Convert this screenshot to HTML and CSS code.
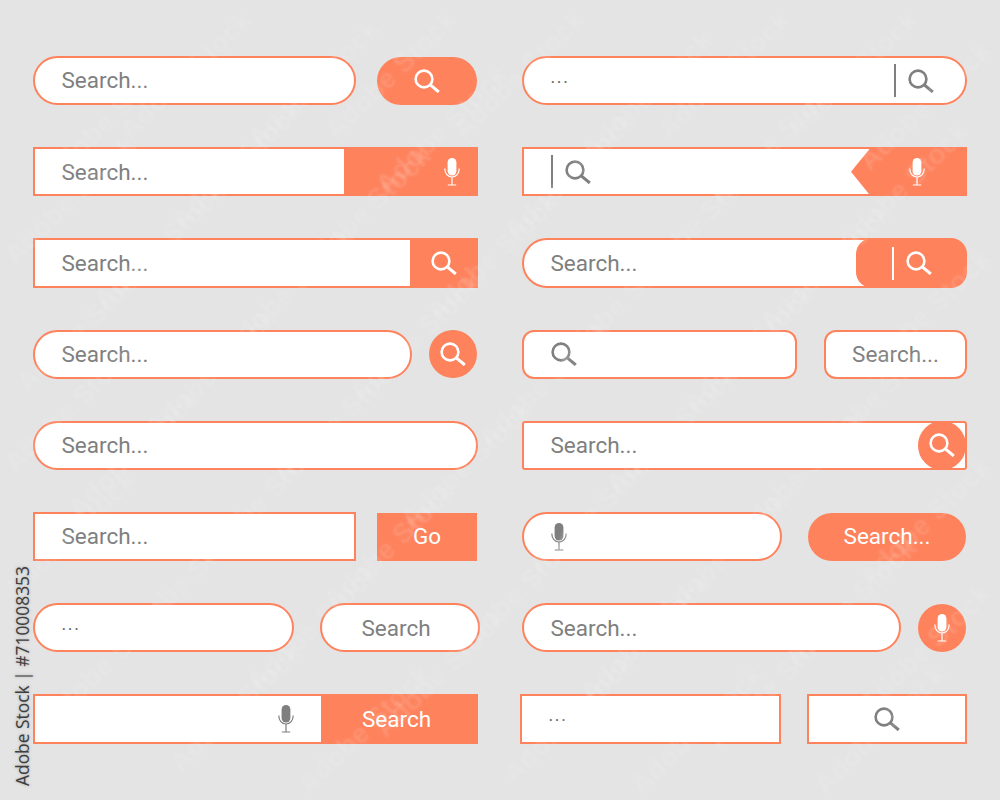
FILE: index.html
```html
<!DOCTYPE html>
<html lang="en">
<head>
<meta charset="utf-8">
<title>Search bars</title>
<link rel="stylesheet" href="styles.css">
</head>
<body>
<svg class="defs" width="0" height="0" aria-hidden="true">
  <symbol id="i-search" viewBox="0 0 26 24">
    <circle cx="10" cy="10" r="8.4" fill="none" stroke="currentColor" stroke-width="2.6"/>
    <path d="M16 15.6 L24.8 23" fill="none" stroke="currentColor" stroke-width="3"/>
  </symbol>
  <symbol id="i-mic" viewBox="0 0 16 28">
    <rect x="3.6" y="0" width="8.8" height="17.5" rx="4.4" fill="currentColor"/>
    <path d="M0.8 10.5 C0.8 15.5 3.8 19 8 19 C12.2 19 15.2 15.5 15.2 10.5 M8 19 V27 M3.8 27 H12.2" fill="none" stroke="currentColor" stroke-width="1.2"/>
  </symbol>
</svg>

<main class="board">
  <section class="col">
    <div class="row">
      <div class="field pill w323"><span class="txt">Search...</span></div>
      <div class="solid pill w100 mla mr1"><svg class="ico-s"><use href="#i-search"/></svg></div>
    </div>
    <div class="row">
      <div class="field full"><span class="txt">Search...</span>
        <div class="end w134 pr18"><svg class="ico-m"><use href="#i-mic"/></svg></div>
      </div>
    </div>
    <div class="row">
      <div class="field full"><span class="txt">Search...</span>
        <div class="end w68 center"><svg class="ico-s"><use href="#i-search"/></svg></div>
      </div>
    </div>
    <div class="row">
      <div class="field pill w379"><span class="txt">Search...</span></div>
      <div class="solid round mla mr1"><svg class="ico-s"><use href="#i-search"/></svg></div>
    </div>
    <div class="row">
      <div class="field pill full"><span class="txt">Search...</span></div>
    </div>
    <div class="row">
      <div class="field w323"><span class="txt">Search...</span></div>
      <div class="solid w100 mla mr1"><span class="txt-w">Go</span></div>
    </div>
    <div class="row">
      <div class="field pill w261"><span class="dots">...</span></div>
      <div class="field pill w160 center mla over1 pr8"><span class="txt">Search</span></div>
    </div>
    <div class="row">
      <div class="field full">
        <svg class="ico-m grey mla mr27"><use href="#i-mic"/></svg>
        <div class="end w157 center flat pr6"><span class="txt-w">Search</span></div>
      </div>
    </div>
  </section>

  <section class="col">
    <div class="row">
      <div class="field pill full"><span class="dots">...</span>
        <div class="tool grey mla mr31"><i class="bar"></i><svg class="ico-s"><use href="#i-search"/></svg></div>
      </div>
    </div>
    <div class="row">
      <div class="field full">
        <div class="tool grey"><i class="bar"></i><svg class="ico-s"><use href="#i-search"/></svg></div>
        <div class="end w116 arrow center"><svg class="ico-m"><use href="#i-mic"/></svg></div>
      </div>
    </div>
    <div class="row">
      <div class="field pill full"><span class="txt">Search...</span>
        <div class="end w111 center soft"><div class="tool white"><i class="bar"></i><svg class="ico-s"><use href="#i-search"/></svg></div></div>
      </div>
    </div>
    <div class="row">
      <div class="field r12 w275"><svg class="ico-s grey"><use href="#i-search"/></svg></div>
      <div class="field r12 w143 center mla"><span class="txt">Search...</span></div>
    </div>
    <div class="row">
      <div class="field r3 full"><span class="txt">Search...</span>
        <div class="solid round end-round"><svg class="ico-s"><use href="#i-search"/></svg></div>
      </div>
    </div>
    <div class="row">
      <div class="field pill w260"><svg class="ico-m grey"><use href="#i-mic"/></svg></div>
      <div class="solid pill w158 mla mr1"><span class="txt-w">Search...</span></div>
    </div>
    <div class="row">
      <div class="field pill w379"><span class="txt">Search...</span></div>
      <div class="solid round mla mr1"><svg class="ico-m"><use href="#i-mic"/></svg></div>
    </div>
    <div class="row shift">
      <div class="field w261"><span class="dots">...</span></div>
      <div class="field w160 center mla"><svg class="ico-s grey"><use href="#i-search"/></svg></div>
    </div>
  </section>
</main>

<div class="marks" aria-hidden="true">
  <span style="left:70px;top:200px">Adobe Stock</span><span style="left:237px;top:165px">Adobe Stock</span><span style="left:442px;top:130px">Adobe Stock</span><span style="left:647px;top:95px">Adobe Stock</span><span style="left:852px;top:75px">Adobe Stock</span>
  <span style="left:160px;top:246px">Adobe Stock</span><span style="left:365px;top:211px">Adobe Stock</span><span style="left:570px;top:176px">Adobe Stock</span><span style="left:775px;top:141px">Adobe Stock</span><span style="left:925px;top:106px">Adobe Stock</span>
  <span style="left:83px;top:327px">Adobe Stock</span><span style="left:288px;top:292px">Adobe Stock</span><span style="left:493px;top:257px">Adobe Stock</span><span style="left:698px;top:222px">Adobe Stock</span><span style="left:903px;top:187px">Adobe Stock</span>
  <span style="left:70px;top:408px">Adobe Stock</span><span style="left:211px;top:373px">Adobe Stock</span><span style="left:416px;top:338px">Adobe Stock</span><span style="left:621px;top:303px">Adobe Stock</span><span style="left:826px;top:268px">Adobe Stock</span>
  <span style="left:134px;top:454px">Adobe Stock</span><span style="left:339px;top:419px">Adobe Stock</span><span style="left:544px;top:384px">Adobe Stock</span><span style="left:749px;top:349px">Adobe Stock</span><span style="left:925px;top:314px">Adobe Stock</span>
  <span style="left:70px;top:535px">Adobe Stock</span><span style="left:262px;top:500px">Adobe Stock</span><span style="left:467px;top:465px">Adobe Stock</span><span style="left:672px;top:430px">Adobe Stock</span><span style="left:877px;top:395px">Adobe Stock</span>
  <span style="left:185px;top:581px">Adobe Stock</span><span style="left:390px;top:546px">Adobe Stock</span><span style="left:595px;top:511px">Adobe Stock</span><span style="left:800px;top:476px">Adobe Stock</span>
  <span style="left:108px;top:662px">Adobe Stock</span><span style="left:313px;top:627px">Adobe Stock</span><span style="left:518px;top:592px">Adobe Stock</span><span style="left:723px;top:557px">Adobe Stock</span><span style="left:925px;top:522px">Adobe Stock</span>
  <span style="left:236px;top:708px">Adobe Stock</span><span style="left:441px;top:673px">Adobe Stock</span><span style="left:646px;top:638px">Adobe Stock</span><span style="left:851px;top:603px">Adobe Stock</span>
  <span style="left:364px;top:730px">Adobe Stock</span><span style="left:569px;top:719px">Adobe Stock</span><span style="left:774px;top:684px">Adobe Stock</span><span style="left:925px;top:649px">Adobe Stock</span>
  <span style="left:697px;top:730px">Adobe Stock</span><span style="left:880px;top:730px">Adobe Stock</span>
  <span style="left:109px;top:119px">Adobe Stock</span><span style="left:314px;top:84px">Adobe Stock</span><span style="left:519px;top:75px">Adobe Stock</span><span style="left:724px;top:75px">Adobe Stock</span>
  <span style="left:186px;top:75px">Adobe Stock</span><span style="left:391px;top:75px">Adobe Stock</span>
</div>

<div class="credit">Adobe Stock | #710008353</div>
</body>
</html>
```
FILE: styles.css
```css
* { box-sizing: border-box; }

html, body {
  margin: 0;
  width: 1000px;
  height: 800px;
  overflow: hidden;
}

body {
  position: relative;
  background: #e4e4e4;
  font-family: Roboto, "Liberation Sans", sans-serif;
  color: #7f7f7f;
}

.defs { position: absolute; }

.board {
  display: flex;
  gap: 44px;
  padding: 56px 33px 0;
}

.col {
  width: 445px;
  display: flex;
  flex-direction: column;
  gap: 41.9px;
}

.row {
  display: flex;
  align-items: center;
  height: 49.3px;
}

.field {
  display: flex;
  align-items: center;
  flex: none;
  height: 100%;
  padding-left: 26.5px;
  background: #fff;
  border: 2px solid #fe825c;
}

.solid {
  display: flex;
  align-items: center;
  justify-content: center;
  flex: none;
  height: 48px;
  background: #fe825c;
  color: #fff;
}

.pill { border-radius: 25px; }
.round { width: 48px; border-radius: 50%; }
.r12 { border-radius: 12px; }
.r3 { border-radius: 3px; }

.full { width: 100%; }
.w323 { width: 323px; }
.w100 { width: 100px; }
.w379 { width: 379px; }
.w261 { width: 261px; }
.w260 { width: 260px; }
.w275 { width: 275px; }
.w143 { width: 143px; }
.w158 { width: 158px; }
.w160 { width: 160px; }

.mla { margin-left: auto; }
.mr1 { margin-right: 1px; }
.mr27 { margin-right: 27px; }
.mr31 { margin-right: 31px; }

.center { justify-content: center; padding-left: 0; }
.pr6 { padding-right: 6px; }
.pr8 { padding-right: 8px; }
.over1 { margin-right: -2px; }
.shift { margin-left: -2px; }

.txt, .txt-w {
  font-size: 22.5px;
  line-height: 1;
  white-space: nowrap;
}

.txt { color: #7f7f7f; }
.txt-w { color: #fff; }

.dots {
  font-size: 18px;
  line-height: 1;
  letter-spacing: 1.6px;
  color: #6a6a6a;
  transform: translateY(-4px);
}

.end {
  display: flex;
  align-items: center;
  flex: none;
  align-self: stretch;
  margin: -2px -2px -2px auto;
  background: #fe825c;
  color: #fff;
}

.w134 { width: 134px; justify-content: flex-end; }
.pr18 { padding-right: 18px; }
.w68 { width: 68px; }
.w157 { width: 157px; }
.flat { margin-left: 0; }
.w116 { width: 116px; padding-left: 16px; }
.w111 { width: 111px; }
.soft { border-radius: 16px; }

.arrow { clip-path: polygon(0 50%, 20px 0, 100% 0, 100% 100%, 20px 100%); }

.end-round {
  margin: -2px -1px -2px auto;
  height: 49.3px;
}

.tool {
  display: flex;
  align-items: center;
  gap: 12px;
}

.bar {
  display: block;
  width: 2px;
  height: 33px;
  background: currentColor;
}

.grey { color: #7f7f7f; }
.white { color: #fff; }

.ico-s { display: block; flex: none; width: 26px; height: 24px; }
.ico-m { display: block; flex: none; width: 16px; height: 28px; }

.marks {
  position: absolute;
  inset: 0;
  overflow: hidden;
  pointer-events: none;
}

.marks span {
  position: absolute;
  transform: translate(-50%, -50%) rotate(-44deg);
  font-family: "Liberation Sans", sans-serif;
  font-size: 28px;
  font-weight: 700;
  white-space: nowrap;
  color: rgba(255, 255, 255, 0.06);
  text-shadow: 0 0 4px rgba(255, 255, 255, 0.1);
}

.credit {
  position: absolute;
  left: 12px;
  bottom: 14px;
  writing-mode: vertical-rl;
  transform: rotate(180deg);
  font-family: "Open Sans", sans-serif;
  font-size: 17.4px;
  font-weight: 500;
  line-height: 20px;
  white-space: nowrap;
  color: #3d3d3d;
  text-shadow: 0 0 3px rgba(150, 150, 150, 0.8);
}
```
